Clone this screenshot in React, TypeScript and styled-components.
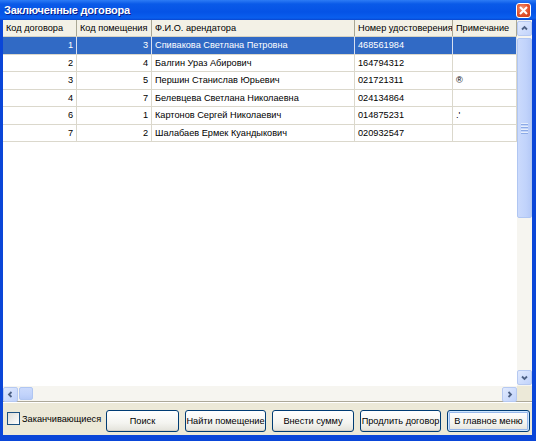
import styled, { createGlobalStyle } from "styled-components";

const GlobalStyle = createGlobalStyle`
  html, body {
    margin: 0;
    padding: 0;
    background: #ffffff;
  }
  body {
    font-family: "Liberation Sans", Arial, sans-serif;
  }
`;

const columns = [
  { title: "Код договора", width: 74, align: "right" },
  { title: "Код помещения", width: 75, align: "right" },
  { title: "Ф.И.О. арендатора", width: 203, align: "left" },
  { title: "Номер удостоверения", width: 98, align: "left" },
  { title: "Примечание", width: 64, align: "left" },
] as const;

const rows = [
  ["1", "3", "Спивакова Светлана Петровна", "468561984", ""],
  ["2", "4", "Балгин Ураз Абирович", "164794312", ""],
  ["3", "5", "Першин Станислав Юрьевич", "021721311", "®"],
  ["4", "7", "Белевцева Светлана Николаевна", "024134864", ""],
  ["6", "1", "Картонов Сергей Николаевич", "014875231", ".'"],
  ["7", "2", "Шалабаев Ермек Куандыкович", "020932547", ""],
];

const buttons = [
  { label: "Поиск", width: 73 },
  { label: "Найти помещение", width: 81 },
  { label: "Внести сумму", width: 82 },
  { label: "Продлить договор", width: 81 },
  { label: "В главное меню", width: 83, focused: true },
];

export default function App() {
  return (
    <>
      <GlobalStyle />
      <Window>
        <TitleBar>
          <Title>Заключенные договора</Title>
          <CloseButton>
            <svg width="9" height="9" viewBox="0 0 9 9">
              <path d="M1 1L8 8M8 1L1 8" stroke="#fff" strokeWidth="2" />
            </svg>
          </CloseButton>
        </TitleBar>
        <Body>
          <GridArea>
            <Table>
              <HeaderRow>
                {columns.map((c) => (
                  <HeaderCell key={c.title} $width={c.width}>
                    {c.title}
                  </HeaderCell>
                ))}
              </HeaderRow>
              {rows.map((r, i) => (
                <Row key={i} $selected={i === 0}>
                  {r.map((v, j) => (
                    <Cell
                      key={j}
                      $width={columns[j].width}
                      $align={columns[j].align}
                      $selected={i === 0}
                    >
                      {v}
                    </Cell>
                  ))}
                </Row>
              ))}
            </Table>
            <VScroll>
              <ArrowButton>
                <Chevron d="M4 7.5L6.5 5L9 7.5" />
              </ArrowButton>
              <VThumb>
                <Grip>
                  <span />
                  <span />
                  <span />
                  <span />
                </Grip>
              </VThumb>
              <Track />
              <ArrowButton>
                <Chevron d="M4 5.5L6.5 8L9 5.5" />
              </ArrowButton>
            </VScroll>
            <HScroll>
              <ArrowButton>
                <Chevron d="M7.5 4L5 6.5L7.5 9" />
              </ArrowButton>
              <HThumb />
              <Track />
              <ArrowButton>
                <Chevron d="M5.5 4L8 6.5L5.5 9" />
              </ArrowButton>
            </HScroll>
            <Corner />
          </GridArea>
          <Panel>
            <CheckLabel>
              <CheckBox />
              Заканчивающиеся
            </CheckLabel>
            <Buttons>
              {buttons.map((b) => (
                <Button key={b.label} $width={b.width} $focused={!!b.focused}>
                  {b.label}
                </Button>
              ))}
            </Buttons>
          </Panel>
        </Body>
      </Window>
    </>
  );
}

function Chevron({ d }: { d: string }) {
  return (
    <svg width="13" height="13" viewBox="0 0 13 13">
      <path d={d} fill="none" stroke="#4d6185" strokeWidth="1.8" />
    </svg>
  );
}

const Window = styled.div`
  width: 536px;
  height: 441px;
  display: flex;
  flex-direction: column;
  background: #0a46d8;
  box-sizing: border-box;
  overflow: hidden;
`;

const TitleBar = styled.div`
  height: 20px;
  flex: none;
  display: flex;
  align-items: center;
  justify-content: space-between;
  padding: 0 5px 0 4px;
  background: linear-gradient(
    to bottom,
    #2d7cf5 0%,
    #0a5ae8 20%,
    #0553e6 60%,
    #0a5fee 90%,
    #0846cf 100%
  );
`;

const Title = styled.div`
  color: #ffffff;
  font-weight: bold;
  font-size: 11px;
  letter-spacing: -0.2px;
  text-shadow: 1px 1px 0 #0a1e8a;
`;

const CloseButton = styled.div`
  width: 15px;
  height: 15px;
  box-sizing: border-box;
  border: 1px solid #ffffff;
  border-radius: 3px;
  background: radial-gradient(circle at 40% 35%, #f29a7c 0%, #e2502a 55%, #c83c1c 100%);
  display: flex;
  align-items: center;
  justify-content: center;
`;

const Body = styled.div`
  flex: 1;
  display: flex;
  flex-direction: column;
  margin: 0 4px 6px 3px;
  background: #ece9d8;
  min-height: 0;
`;

const GridArea = styled.div`
  flex: 1;
  display: grid;
  grid-template-columns: 1fr 15px;
  grid-template-rows: 1fr 15px;
  background: #ffffff;
  min-height: 0;
  border-bottom: 1px solid #aca899;
`;

const Table = styled.div`
  display: flex;
  flex-direction: column;
  overflow: hidden;
  font-size: 9.2px;
  color: #000000;
`;

const HeaderRow = styled.div`
  display: flex;
  height: 17px;
  flex: none;
  background: #f3f1e6;
  border-bottom: 1px solid #d6d3c2;
  box-sizing: border-box;
`;

const HeaderCell = styled.div<{ $width: number }>`
  width: ${(p) => p.$width}px;
  flex: none;
  box-sizing: border-box;
  padding: 0 3px;
  border-right: 1px solid #a9a794;
  display: flex;
  align-items: center;
  white-space: nowrap;
  overflow: hidden;
`;

const Row = styled.div<{ $selected: boolean }>`
  display: flex;
  height: 17.5px;
  flex: none;
  box-sizing: border-box;
  border-bottom: 1px solid #dbd8cc;
  background: ${(p) => (p.$selected ? "#316ac5" : "#ffffff")};
  color: ${(p) => (p.$selected ? "#ffffff" : "#000000")};
`;

const Cell = styled.div<{ $width: number; $align: string; $selected: boolean }>`
  width: ${(p) => p.$width}px;
  flex: none;
  box-sizing: border-box;
  padding: 0 3px;
  border-right: 1px solid ${(p) => (p.$selected ? "#d8e0f0" : "#dbd8cc")};
  display: flex;
  align-items: center;
  justify-content: ${(p) => (p.$align === "right" ? "flex-end" : "flex-start")};
  white-space: nowrap;
  overflow: hidden;
`;

const VScroll = styled.div`
  display: flex;
  flex-direction: column;
  background: #f6f5f0;
`;

const HScroll = styled.div`
  display: flex;
  background: #f6f5f0;
`;

const ArrowButton = styled.div`
  width: 15px;
  height: 15px;
  flex: none;
  box-sizing: border-box;
  border: 1px solid #b6c9f1;
  border-radius: 2px;
  background: linear-gradient(to bottom right, #e1eafe, #c1d3fb);
  display: flex;
  align-items: center;
  justify-content: center;
  margin: 1px 0;
`;

const VThumb = styled.div`
  height: 180px;
  flex: none;
  box-sizing: border-box;
  border: 1px solid #b0c6f2;
  border-radius: 2px;
  background: linear-gradient(to right, #cbdafc, #c1d3fb 60%, #b6caf7);
  display: flex;
  align-items: center;
  justify-content: center;
  margin-top: 1px;
`;

const Grip = styled.div`
  display: flex;
  flex-direction: column;
  gap: 1px;
  span {
    display: block;
    width: 7px;
    height: 1px;
    background: #e6eefc;
    border-bottom: 1px solid #8caae6;
  }
`;

const HThumb = styled.div`
  width: 14px;
  flex: none;
  box-sizing: border-box;
  border: 1px solid #b0c6f2;
  border-radius: 2px;
  background: linear-gradient(to bottom, #cbdafc, #c1d3fb 60%, #b6caf7);
  margin: 1px 0 1px 1px;
`;

const Track = styled.div`
  flex: 1;
`;

const Corner = styled.div`
  background: #ece9d8;
`;

const Panel = styled.div`
  height: 33px;
  flex: none;
  box-sizing: border-box;
  display: flex;
  align-items: flex-end;
  justify-content: space-between;
  padding: 0 2px 3px 4px;
  border-top: 1px solid #ffffff;
  font-size: 9.2px;
`;

const CheckLabel = styled.label`
  display: flex;
  align-items: center;
  gap: 2px;
  color: #000000;
  margin-bottom: 7px;
`;

const CheckBox = styled.span`
  width: 13px;
  height: 13px;
  box-sizing: border-box;
  border: 1px solid #1c5180;
  background: linear-gradient(to bottom right, #dcdcd7, #ffffff);
`;

const Buttons = styled.div`
  display: flex;
  gap: 6px;
`;

const Button = styled.div<{ $width: number; $focused: boolean }>`
  width: ${(p) => p.$width}px;
  height: 22px;
  box-sizing: border-box;
  border: 1px solid #003c74;
  border-radius: 3px;
  background: linear-gradient(to bottom, #ffffff 0%, #f4f4f0 60%, #e3e2da 100%);
  box-shadow: ${(p) =>
    p.$focused
      ? "inset 0 0 0 1px #cee7ff, inset 0 0 0 2px #98b8ea"
      : "inset 0 -1px 0 #d6d0c5"};
  display: flex;
  align-items: center;
  justify-content: center;
  color: #000000;
  white-space: nowrap;
`;
